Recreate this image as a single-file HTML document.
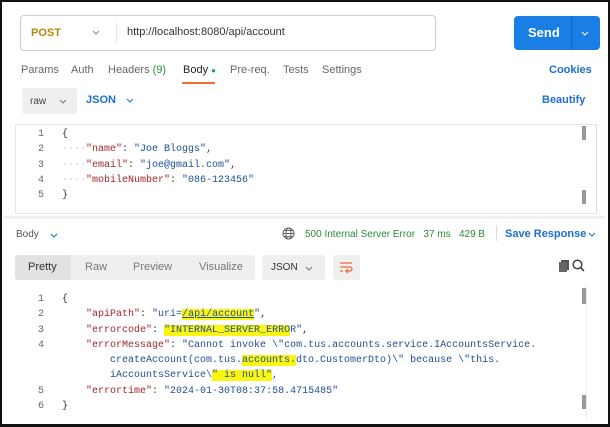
<!DOCTYPE html><html><head><style>
*{margin:0;padding:0;box-sizing:border-box}
body{width:610px;height:427px;background:#fff;position:relative;overflow:hidden;font-family:"Liberation Sans",sans-serif;font-size:11px;color:#333}
.a{position:absolute;white-space:nowrap}
.m{font-family:"Liberation Mono",monospace;font-size:10px}
.k{color:#a3262b}.s{color:#1d4f96}.n{color:#666}
.hl{background:#fbf514}
svg.c{position:absolute}
</style></head><body>
<div class="a" style="left:0;top:0;width:610px;height:427px;border:2px solid #111;border-bottom-width:3px"></div>
<div class="a" style="left:20px;top:15px;width:416px;height:36px;border:1px solid #ccc;border-radius:4px"></div>
<div class="a" style="left:31px;top:27px;color:#b8860b;font-weight:bold;font-size:11px">POST</div>
<svg class="c" style="left:92px;top:30px" width="8" height="5"><path d="M1 1L4 4L7 1" stroke="#888" fill="none"/></svg>
<div class="a" style="left:116px;top:23px;width:1px;height:20px;background:#e3e3e3"></div>
<div class="a" style="left:127px;top:26px;font-size:11px;color:#333">http://localhost:8080/api/account</div>
<div class="a" style="left:514px;top:16px;width:86px;height:34px;background:#1a7fe5;border-radius:4px"></div>
<div class="a" style="left:571px;top:16px;width:1px;height:34px;background:#1465bb"></div>
<div class="a" style="left:528px;top:25px;color:#fff;font-weight:bold;font-size:13px">Send</div>
<svg class="c" style="left:581px;top:31px" width="8" height="5"><path d="M1 1L4 4L7 1" stroke="#fff" fill="none"/></svg>
<div class="a" style="top:64px;left:21px;color:#666;font-size:11px">Params</div>
<div class="a" style="top:64px;left:71px;color:#666">Auth</div>
<div class="a" style="top:64px;left:108px;color:#666">Headers <span style="color:#2a8a3a">(9)</span></div>
<div class="a" style="top:64px;left:183px;color:#222">Body <span style="color:#1ea35b;font-size:8px">●</span></div>
<div class="a" style="left:182px;top:82px;width:33px;height:2px;background:#f26b3a"></div>
<div class="a" style="top:64px;left:230px;color:#666">Pre-req.</div>
<div class="a" style="top:64px;left:283px;color:#666">Tests</div>
<div class="a" style="top:64px;left:322px;color:#666">Settings</div>
<div class="a" style="top:64px;left:549px;color:#1a6fd0;font-weight:bold">Cookies</div>
<div class="a" style="left:22px;top:88px;width:55px;height:26px;background:#efefef;border-radius:3px"></div>
<div class="a" style="left:30px;top:96px;font-size:10px;color:#444">raw</div>
<svg class="c" style="left:59px;top:99px" width="8" height="5"><path d="M1 1L4 4L7 1" stroke="#777" fill="none"/></svg>
<div class="a" style="left:86px;top:94px;color:#1a6fd0;font-weight:bold">JSON</div>
<svg class="c" style="left:126px;top:98px" width="8" height="5"><path d="M1 1L4 4L7 1" stroke="#1a6fd0" fill="none"/></svg>
<div class="a" style="left:542px;top:94px;color:#1a6fd0;font-weight:bold">Beautify</div>
<div class="a" style="left:15px;top:124px;width:582px;height:90px;border:1px solid #e6e6e6;border-right:1px solid #ddd"></div>
<div class="a" style="left:582px;top:126px;width:4px;height:14px;background:#999"></div>
<div class="a" style="left:582px;top:190px;width:4px;height:14px;background:#999"></div>
<div class="a m n" style="left:38px;top:127px;line-height:15.3px;text-align:right">1<br>2<br>3<br>4<br>5</div>
<div class="a m" style="left:62px;top:127px;line-height:15.3px;color:#333">{<br><span style="color:#ccc">····</span><span class="k">"name"</span>: <span class="s">"Joe Bloggs"</span>,<br><span style="color:#ccc">····</span><span class="k">"email"</span>: <span class="s">"joe@gmail.com"</span>,<br><span style="color:#ccc">····</span><span class="k">"mobileNumber"</span>: <span class="s">"086-123456"</span><br>}</div>
<div class="a" style="left:3px;top:216px;width:602px;height:3px;background:#f1f1f1"></div>
<div class="a" style="left:16px;top:229px;color:#555;font-size:10px">Body</div>
<svg class="c" style="left:50px;top:233px" width="8" height="5"><path d="M1 1L4 4L7 1" stroke="#1a6fd0" fill="none"/></svg>
<svg class="c" style="left:282px;top:227px" width="13" height="13" viewBox="0 0 13 13"><g stroke="#666" fill="none"><circle cx="6.5" cy="6.5" r="5.5"/><ellipse cx="6.5" cy="6.5" rx="2.5" ry="5.5"/><path d="M1 6.5H12M2 3.5H11M2 9.5H11"/></g></svg>
<div class="a" style="left:305px;top:229px;color:#2a8a3a;font-size:10px">500 Internal Server Error &nbsp; 37 ms &nbsp; 429 B</div>
<div class="a" style="left:496px;top:225px;width:1px;height:16px;background:#ddd"></div>
<div class="a" style="left:505px;top:228px;color:#1a6fd0;font-weight:bold">Save Response</div>
<svg class="c" style="left:588px;top:232px" width="8" height="5"><path d="M1 1L4 4L7 1" stroke="#1a6fd0" fill="none"/></svg>
<div class="a" style="left:15px;top:255px;width:240px;height:25px;background:#efefef;border-radius:3px"></div>
<div class="a" style="left:15px;top:255px;width:56px;height:25px;background:#e2e2e2;border-radius:3px 0 0 3px"></div>
<div class="a" style="left:28px;top:261px;color:#333">Pretty</div>
<div class="a" style="left:85px;top:261px;color:#777">Raw</div>
<div class="a" style="left:133px;top:261px;color:#777">Preview</div>
<div class="a" style="left:199px;top:261px;color:#777">Visualize</div>
<div class="a" style="left:262px;top:255px;width:63px;height:25px;background:#efefef;border-radius:3px"></div>
<div class="a" style="left:271px;top:262px;font-size:10px;color:#333">JSON</div>
<svg class="c" style="left:305px;top:266px" width="8" height="5"><path d="M1 1L4 4L7 1" stroke="#777" fill="none"/></svg>
<div class="a" style="left:333px;top:255px;width:27px;height:25px;background:#efefef;border-radius:3px"></div>
<svg class="c" style="left:339px;top:261px" width="14" height="13" viewBox="0 0 14 13"><g stroke="#f26b3a" fill="none" stroke-width="1.3"><path d="M1 2H13M1 6H11a2 2 0 0 1 0 4H7M9 8L7 10L9 12M1 10H4"/></g></svg>
<svg class="c" style="left:558px;top:259px" width="12" height="13"><rect x="3" y="1" width="8" height="10" fill="#555"/><rect x="1" y="3" width="8" height="10" fill="#666"/></svg>
<svg class="c" style="left:572px;top:259px" width="13" height="13"><circle cx="5.5" cy="5.5" r="4.3" stroke="#444" stroke-width="1.5" fill="none"/><path d="M8.5 8.5L12 12" stroke="#444" stroke-width="1.6"/></svg>
<div class="a" style="left:582px;top:288px;width:4px;height:16px;background:#999"></div>
<div class="a" style="left:582px;top:395px;width:4px;height:14px;background:#999"></div>
<div class="a" style="left:586px;top:285px;width:1px;height:135px;background:#eee"></div>
<div class="a m n" style="left:38px;top:292px;line-height:15.3px">1<br>2<br>3<br>4<br><br><br>5<br>6</div>
<div class="a m" style="left:62px;top:292px;line-height:15.3px;color:#333">{<br>&nbsp;&nbsp;&nbsp;&nbsp;<span class="k">"apiPath"</span>: <span class="s">"uri=<span class="hl" style="text-decoration:underline">/api/account</span>"</span>,<br>&nbsp;&nbsp;&nbsp;&nbsp;<span class="k">"errorcode"</span>: <span class="s"><span class="hl">"INTERNAL_SERVER_ERRO</span>R"</span>,<br>&nbsp;&nbsp;&nbsp;&nbsp;<span class="k">"errorMessage"</span>: <span class="s">"Cannot invoke \"com.tus.accounts.service.IAccountsService.</span><br><span class="s">&nbsp;&nbsp;&nbsp;&nbsp;&nbsp;&nbsp;&nbsp;&nbsp;createAccount(com.tus.<span class="hl">accounts.</span>dto.CustomerDto)\" because \"this.</span><br><span class="s">&nbsp;&nbsp;&nbsp;&nbsp;&nbsp;&nbsp;&nbsp;&nbsp;iAccountsService\<span class="hl">" is null"</span>,</span><br>&nbsp;&nbsp;&nbsp;&nbsp;<span class="k">"errortime"</span>: <span class="s">"2024-01-30T08:37:58.4715485"</span><br>}</div>
</body></html>
